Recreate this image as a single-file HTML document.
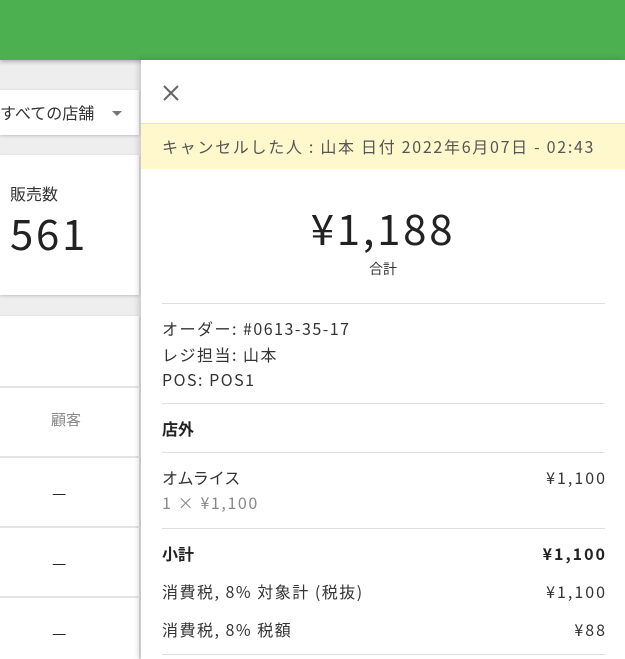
<!DOCTYPE html>
<html><head><meta charset="utf-8"><style>
*{margin:0;padding:0;box-sizing:border-box}
body{width:625px;height:659px;overflow:hidden;background:#eeeeee;font-family:"Noto Sans CJK JP","Liberation Sans",sans-serif;color:#222;position:relative}
.hdr{position:absolute;left:0;top:0;width:625px;height:60px;background:#4caf50;box-shadow:0 2px 4px rgba(0,0,0,.25)}
.card{position:absolute;background:#fff;box-shadow:0 1px 3px rgba(0,0,0,.2)}
.t{position:absolute;white-space:nowrap;line-height:24px;height:24px}
.drawer{position:absolute;left:141px;top:60px;width:484px;height:599px;background:#fff;box-shadow:-2px 0 6px rgba(0,0,0,.18)}
.hr{position:absolute;left:21px;width:443px;height:1px;background:#dedede}
.r{right:18px;letter-spacing:2px}
.row{position:absolute;left:0;width:140px;height:2px;background:#e4e4e4}
</style></head><body>
<div class="hdr"></div>
<div class="card" style="left:0;top:90px;width:139px;height:45px">
 <div class="t" style="left:0;top:10px;font-size:16px;color:#333">すべての店舗</div>
 <div style="position:absolute;left:112px;top:21px;border-left:5px solid transparent;border-right:5px solid transparent;border-top:5px solid #777"></div>
</div>
<div class="card" style="left:0;top:155px;width:139px;height:140px">
 <div class="t" style="left:10px;top:26px;font-size:16px;color:#333">販売数</div>
 <div class="t" style="left:10px;top:53px;height:50px;line-height:50px;font-size:42px;color:#222;letter-spacing:2.7px">561</div>
</div>
<div class="card" style="left:0;top:316px;width:139px;height:343px">
 <div class="row" style="top:70px"></div>
 <div class="t" style="left:51px;top:92px;font-size:15px;color:#888">顧客</div>
 <div class="row" style="top:140px"></div>
 <div class="t" style="left:52px;top:164px;font-size:16px">—</div>
 <div class="row" style="top:210px"></div>
 <div class="t" style="left:52px;top:234px;font-size:16px">—</div>
 <div class="row" style="top:280px"></div>
 <div class="t" style="left:52px;top:304px;font-size:16px">—</div>
</div>
<div class="drawer">
 <svg style="position:absolute;left:22px;top:25px" width="16" height="16" viewBox="0 0 16 16"><path d="M1 1L15 15M15 1L1 15" stroke="#666" stroke-width="2"/></svg>
 <div style="position:absolute;left:0;top:63px;width:484px;height:46px;background:#fff8cc;border-top:1px solid #e8e2b8"></div>
 <div class="t" style="left:21px;top:74px;font-size:16px;color:#555;letter-spacing:1.7px">キャンセルした人 : 山本 日付 2022年6月07日 - 02:43</div>
 <div class="t" style="left:0;width:484px;text-align:center;top:143px;height:50px;line-height:50px;font-size:42px;color:#222;letter-spacing:2.7px">¥1,188</div>
 <div class="t" style="left:0;width:484px;text-align:center;top:197px;font-size:14px;color:#333">合計</div>
 <div class="hr" style="top:243px"></div>
 <div class="t" style="left:21px;top:256px;font-size:16px;line-height:25.5px;height:77px;color:#333;letter-spacing:1.5px">オーダー: #0613-35-17<br>レジ担当: 山本<br>POS: POS1</div>
 <div class="hr" style="top:343px"></div>
 <div class="t" style="left:21px;top:356px;font-size:16px;font-weight:bold">店外</div>
 <div class="hr" style="top:392px"></div>
 <div class="t" style="left:21px;top:405px;font-size:16px;color:#333">オムライス</div>
 <div class="t r" style="top:405px;font-size:16px;color:#333">¥1,100</div>
 <div class="t" style="left:21px;top:430px;font-size:16px;color:#888;letter-spacing:1.6px">1 × ¥1,100</div>
 <div class="hr" style="top:468px"></div>
 <div class="t" style="left:21px;top:481px;font-size:16px;font-weight:bold">小計</div>
 <div class="t r" style="top:481px;font-size:16px;font-weight:bold">¥1,100</div>
 <div class="t" style="left:21px;top:519px;font-size:16px;color:#333;letter-spacing:1.5px">消費税, 8% 対象計 (税抜)</div>
 <div class="t r" style="top:519px;font-size:16px;color:#333">¥1,100</div>
 <div class="t" style="left:21px;top:557px;font-size:16px;color:#333;letter-spacing:1.5px">消費税, 8% 税額</div>
 <div class="t r" style="top:557px;font-size:16px;color:#333">¥88</div>
 <div class="hr" style="top:594px"></div>
</div>
</body></html>
